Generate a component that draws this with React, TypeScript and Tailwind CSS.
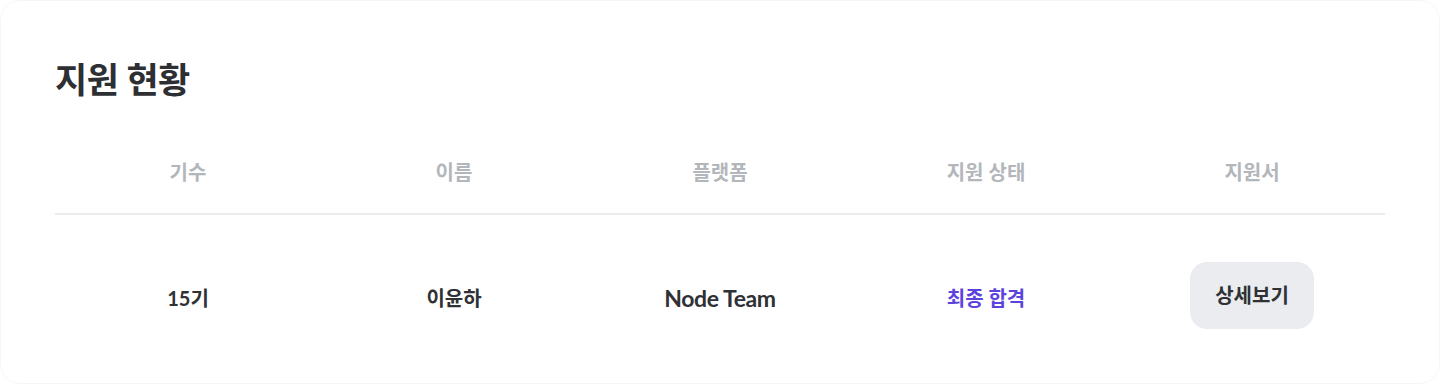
const FONT = { fontFamily: '"Lato", "Noto Sans CJK KR", sans-serif' };

type Row = {
    generation: string;
    name: string;
    platform: string;
    status: string;
};

const COLUMNS = ["기수", "이름", "플랫폼", "지원 상태", "지원서"];

const rows: Row[] = [{ generation: "15기", name: "이윤하", platform: "Node Team", status: "최종 합격" }];

export default function App() {
    return (
        <div className="w-[1440px] h-[384px] bg-white" style={FONT}>
            <section className="h-full rounded-[20px] border border-[#f6f6f7] bg-white px-[54px] pt-[55px]">
                <h2 className="text-[35px] leading-[46px] font-bold text-[#2d2f33] tracking-[-0.5px]">지원 현황</h2>

                <div className="mt-[29px] grid grid-cols-5 h-[84px] items-center border-b-2 border-[#ececee]">
                    {COLUMNS.map((c) => (
                        <div key={c} className="text-center text-[20px] font-semibold text-[#b3b6bb]">
                            {c}
                        </div>
                    ))}
                </div>

                {rows.map((r) => (
                    <div key={r.name} className="grid grid-cols-5 h-[166px] items-center">
                        <div className="text-center text-[20px] font-bold text-[#2f3135]">{r.generation}</div>
                        <div className="text-center text-[20px] font-bold text-[#2f3135]">{r.name}</div>
                        <div className="text-center text-[23px] font-bold text-[#2f3135] tracking-[-0.4px]">{r.platform}</div>
                        <div className="text-center text-[20px] font-bold text-[#5d43dd]">{r.status}</div>
                        <div className="flex justify-center">
                            <button
                                type="button"
                                className="mb-[6px] w-[124px] h-[67px] rounded-[17px] bg-[#ebecef] text-[20px] font-bold text-[#2f3135]"
                            >
                                상세보기
                            </button>
                        </div>
                    </div>
                ))}
            </section>
        </div>
    );
}
